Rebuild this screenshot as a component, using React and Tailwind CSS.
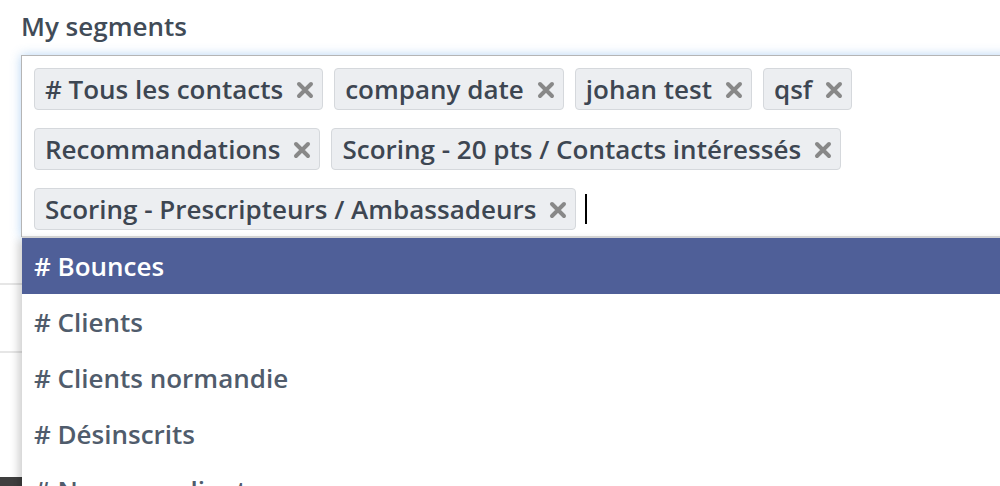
import React from 'react';

const tags = [
  '# Tous les contacts',
  'company date',
  'johan test',
  'qsf',
  'Recommandations',
  'Scoring - 20 pts / Contacts intéressés',
  'Scoring - Prescripteurs / Ambassadeurs',
];

const options = [
  '# Bounces',
  '# Clients',
  '# Clients normandie',
  '# Désinscrits',
  '# Nouveau client',
];

function RemoveIcon() {
  return (
    <svg width="18" height="18" viewBox="0 0 18 18" className="mt-[2px] shrink-0">
      <path d="M3 3 L15 15 M15 3 L3 15" stroke="#888888" strokeWidth="4" strokeLinecap="round" />
    </svg>
  );
}

function Tag({ label }) {
  return (
    <span className="flex items-center h-[42px] pl-[10px] pr-[8px] gap-[13px] bg-[#eceef1] border border-[#d5d8dc] rounded-[4px] text-[#3d4652] whitespace-nowrap">
      <span>{label}</span>
      <RemoveIcon />
    </span>
  );
}

export default function App() {
  return (
    <div
      className="relative w-[1000px] h-[486px] overflow-hidden bg-white text-[26px] leading-[32px] font-semibold"
      style={{ fontFamily: '"Open Sans", "Liberation Sans", sans-serif' }}
    >
      {/* Field label */}
      <div className="pl-[21px] pt-[10px] h-[55px] text-[#414b57]">My segments</div>

      {/* Tag input */}
      <div className="ml-[21px] w-[1060px] h-[182px] border border-[#b5b5b5] bg-white pt-[12px] px-[12px] shadow-[0_0_10px_rgba(90,160,230,0.45)]">
        <div className="flex flex-wrap items-center gap-x-[11px] gap-y-[18px]">
          {tags.map((t) => (
            <Tag key={t} label={t} />
          ))}
          <span className="w-[2px] h-[30px] bg-black -ml-[2px]" />
        </div>
      </div>

      {/* Page content underneath */}
      <div className="h-[48px] border-b-2 border-[#e6e6e6]" />
      <div className="h-[68px] border-b-2 border-[#e6e6e6]" />
      <div className="h-[124px]" />
      <div className="h-[20px] bg-[#3f3f3f]" />

      {/* Dropdown */}
      <div className="absolute left-[22px] top-[236px] w-[1040px] bg-white border-t-2 border-[#d2d2d2] shadow-[-4px_4px_8px_rgba(0,0,0,0.18)]">
        {options.map((o, i) => (
          <div
            key={o}
            className={
              i === 0
                ? 'h-[56px] flex items-center px-[12px] bg-[#4f5f98] text-white'
                : 'h-[56px] flex items-center px-[12px] text-[#505c6c]'
            }
          >
            {o}
          </div>
        ))}
      </div>
    </div>
  );
}
